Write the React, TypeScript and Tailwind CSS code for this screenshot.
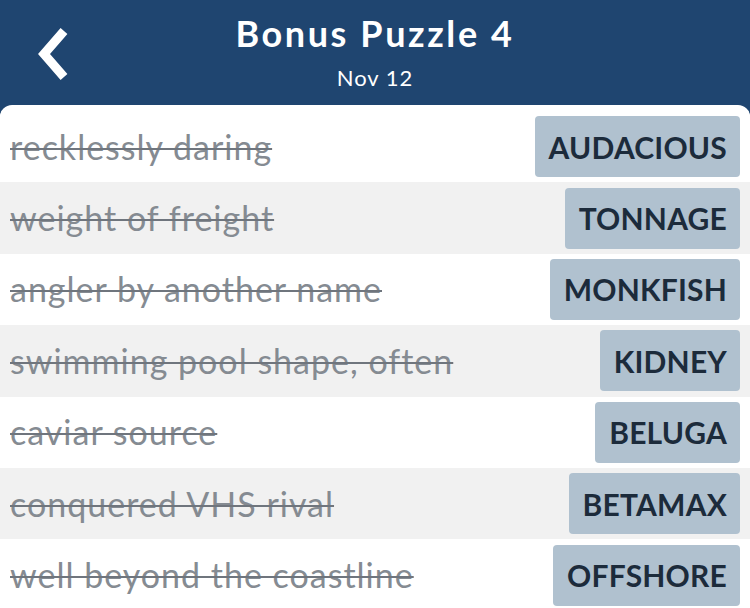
import React from 'react';

const clues = [
  { clue: 'recklessly daring', answer: 'AUDACIOUS' },
  { clue: 'weight of freight', answer: 'TONNAGE' },
  { clue: 'angler by another name', answer: 'MONKFISH' },
  { clue: 'swimming pool shape, often', answer: 'KIDNEY' },
  { clue: 'caviar source', answer: 'BELUGA' },
  { clue: 'conquered VHS rival', answer: 'BETAMAX' },
  { clue: 'well beyond the coastline', answer: 'OFFSHORE' },
];

const ClueRow: React.FC<{ clue: string; answer: string; shaded: boolean }> = ({ clue, answer, shaded }) => (
  <div className={`flex items-center justify-between h-[71.4px] pl-[10px] pr-[10px] ${shaded ? 'bg-[#f1f1f1]' : 'bg-white'}`}>
    <span className="text-[34px] tracking-[1px] text-[#858b92] line-through decoration-[2px] decoration-[#6f757d] leading-none whitespace-nowrap">
      {clue}
    </span>
    <span className="h-[61px] flex items-center pl-[14px] pr-[13px] rounded-[4px] bg-[#b0c1cf] text-[30px] font-bold text-[#1c2b3b] leading-none tracking-[0.2px]">
      {answer}
    </span>
  </div>
);

export default function App() {
  return (
    <div className="w-[750px] h-[608px] overflow-hidden bg-[#1f4570] font-['Lato','Noto_Sans',sans-serif]">
      <header className="relative h-[105px] flex flex-col items-center text-white">
        <button className="absolute left-[32px] top-[27px] w-[40px] h-[54px] flex items-center justify-center">
          <svg width="36" height="54" viewBox="0 0 36 54" fill="none">
            <path d="M30 4 L10 27 L30 50" stroke="white" strokeWidth="9" strokeLinecap="butt" strokeLinejoin="miter" />
          </svg>
        </button>
        <h1 className="mt-[11px] text-[36px] font-bold leading-[44px] tracking-[2.6px]">Bonus Puzzle 4</h1>
        <p className="mt-[10px] text-[22px] leading-[26px] tracking-[1px]">Nov 12</p>
      </header>
      <main className="bg-white rounded-t-[12px] pt-[6px] h-[503px] overflow-hidden">
        {clues.map((c, i) => (
          <ClueRow key={c.answer} clue={c.clue} answer={c.answer} shaded={i % 2 === 1} />
        ))}
      </main>
    </div>
  );
}
